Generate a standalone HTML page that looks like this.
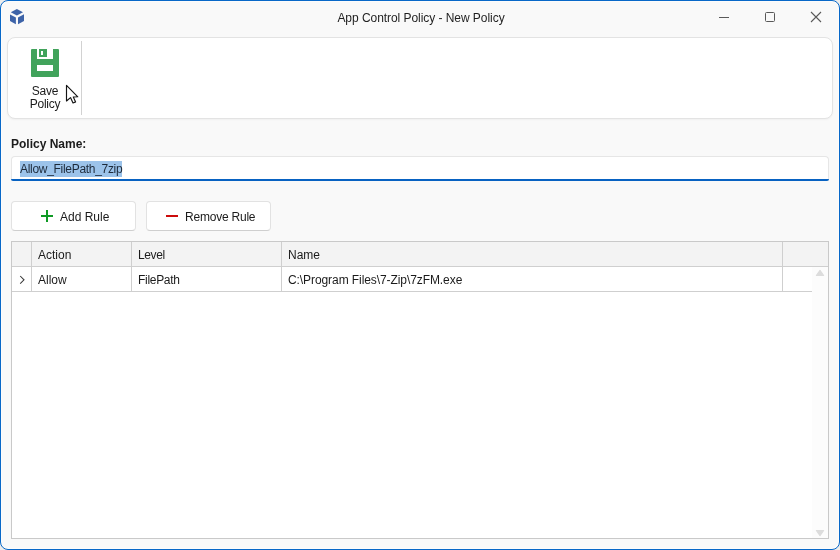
<!DOCTYPE html>
<html><head><meta charset="utf-8">
<style>
html,body{margin:0;padding:0;width:840px;height:550px;overflow:hidden;background:#ececec;}
*{box-sizing:border-box;}
body{font-family:"Liberation Sans",sans-serif;color:#1b1b1b;position:relative;}
.abs{position:absolute;}
#win{position:absolute;left:0;top:0;width:840px;height:550px;border:1px solid #0868c8;border-radius:8px;background:#f9f9f9;box-shadow:inset 1px 1px 0 #fcfcfc, inset -1px -1px 0 #fcfcfc;overflow:hidden;}
.t{position:absolute;white-space:pre;font-size:12px;line-height:14px;will-change:transform;}
#title{left:1px;width:840px;letter-spacing:-0.05px;text-align:center;top:11px;color:#1f1f1f;}
#toolbar{left:7px;top:37px;width:826px;height:82px;background:#fff;border:1px solid #e3e3e3;border-radius:8px;box-shadow:0 1px 2px rgba(0,0,0,0.04);}
#sep{left:81px;top:41px;width:1px;height:74px;background:#d2d2d2;}
#tb{left:11px;top:156px;width:818px;height:25px;background:#fff;border:1px solid #e6e6e6;border-bottom:none;border-radius:4px 4px 2px 2px;}
#tbline{left:11px;top:179px;width:818px;height:2px;background:#0862c2;border-radius:0 0 2px 2px;}
#sel{left:20px;top:161px;width:102px;height:16px;background:#9cc3ea;}
.btn{position:absolute;top:201px;height:30px;width:125px;background:#fff;border:1px solid #e2e2e2;border-bottom-color:#cfcfcf;border-radius:4px;}
#grid{left:11px;top:241px;width:818px;height:298px;background:#fff;border:1px solid #c9c9c9;}
#ghead{left:12px;top:242px;width:816px;height:24px;background:#f3f3f3;}
.hl{position:absolute;height:1px;background:#cfcfcf;}
.vl{position:absolute;width:1px;background:#cfcfcf;}
</style></head><body>
<div id="win">
</div>
<!-- title bar -->
<svg class="abs" style="left:0px;top:0px" width="30" height="30" viewBox="0 0 30 30">
  <path d="M16.9 9 L23 12.2 L16.9 15.5 L10.8 12.2 Z" fill="#3d63a8"/>
  <path d="M10 14.4 L15.9 17.6 L15.9 24.2 L10 21.1 Z" fill="#3d63a8"/>
  <path d="M18 17.6 L24 14.3 L24 21.1 L18 24.2 Z" fill="#3d63a8"/>
</svg>
<div class="t" id="title">App Control Policy - New Policy</div>
<div class="abs" style="left:719px;top:17px;width:10px;height:1px;background:#595959"></div>
<div class="abs" style="left:765px;top:12px;width:10px;height:10px;border:1px solid #595959;border-radius:1.5px"></div>
<svg class="abs" style="left:810px;top:11px" width="13" height="13" viewBox="0 0 13 13">
  <path d="M1 1 L11 11 M11 1 L1 11" stroke="#595959" stroke-width="1.1" fill="none"/>
</svg>

<!-- toolbar -->
<div class="abs" id="toolbar"></div>
<svg class="abs" style="left:31px;top:49px" width="28" height="28" viewBox="0 0 28 28">
  <path d="M1 0 H6 V10 H22 V0 H27 Q28 0 28 1 V27 Q28 28 27 28 H1 Q0 28 0 27 V1 Q0 0 1 0 Z" fill="#41a35b"/>
  <path d="M8 0 H16 V8 H8 Z M10 2 V6 H12 V2 Z" fill="#41a35b" fill-rule="evenodd"/>
  <rect x="6" y="16" width="16" height="6" fill="#fff"/>
</svg>
<div class="t" style="left:31px;top:84px;width:28px;text-align:center;letter-spacing:-0.25px">Save</div>
<div class="t" style="left:25px;top:97px;width:40px;text-align:center;letter-spacing:-0.25px">Policy</div>
<div class="abs" id="sep"></div>
<svg class="abs" style="left:62px;top:82px" width="20" height="24" viewBox="0 0 20 24">
  <path d="M4.5 3.3 L4.5 19 L8.5 15.6 L11 21 L13.6 19.9 L11.3 15 L15.8 14.8 Z" fill="#fff" stroke="#141414" stroke-width="1.15" stroke-linejoin="round"/>
</svg>

<!-- policy name -->
<div class="t" style="left:11px;top:137px;font-weight:bold;">Policy Name:</div>
<div class="abs" id="tb"></div>
<div class="abs" id="tbline"></div>
<div class="abs" id="sel"></div>
<div class="t" style="left:20px;top:162px;color:#1d2a3a;letter-spacing:-0.3px">Allow_FilePath_7zip</div>

<!-- buttons -->
<div class="btn" style="left:11px"></div>
<svg class="abs" style="left:41px;top:210px" width="12" height="12" viewBox="0 0 12 12">
  <path d="M6 0 V12 M0 6 H12" stroke="#0f9a25" stroke-width="2" fill="none"/>
</svg>
<div class="t" style="left:60px;top:210px">Add Rule</div>
<div class="btn" style="left:146px"></div>
<div class="abs" style="left:166px;top:215px;width:12px;height:2px;background:#cc0c0c"></div>
<div class="t" style="left:185px;top:210px;letter-spacing:-0.22px">Remove Rule</div>

<!-- grid -->
<div class="abs" id="grid"></div>
<div class="abs" id="ghead"></div>
<div class="abs" style="left:812px;top:267px;width:16px;height:271px;background:#fcfcfc"></div>
<div class="hl" style="left:12px;top:266px;width:816px"></div>
<div class="hl" style="left:12px;top:291px;width:800px"></div>
<div class="vl" style="left:31px;top:242px;height:49px"></div>
<div class="vl" style="left:131px;top:242px;height:49px"></div>
<div class="vl" style="left:281px;top:242px;height:49px"></div>
<div class="vl" style="left:782px;top:242px;height:49px"></div>
<div class="t" style="left:38px;top:248px">Action</div>
<div class="t" style="left:138px;top:248px;letter-spacing:-0.4px">Level</div>
<div class="t" style="left:288px;top:248px">Name</div>
<svg class="abs" style="left:14px;top:270px" width="18" height="20" viewBox="0 0 18 20">
  <path d="M6.2 6 L10 9.8 L6.2 13.6" stroke="#383838" stroke-width="1.05" fill="none"/>
</svg>
<div class="t" style="left:38px;top:273px">Allow</div>
<div class="t" style="left:138px;top:273px;letter-spacing:-0.3px">FilePath</div>
<div class="t" style="left:288px;top:273px;letter-spacing:-0.08px">C:\Program Files\7-Zip\7zFM.exe</div>
<svg class="abs" style="left:815px;top:269px" width="10" height="8" viewBox="0 0 10 8">
  <path d="M5 1.4 L8.6 6.5 L1.4 6.5 Z" fill="#dcdcdc" stroke="#dcdcdc" stroke-width="1.2" stroke-linejoin="round"/>
</svg>
<svg class="abs" style="left:815px;top:529px" width="10" height="8" viewBox="0 0 10 8">
  <path d="M1.4 1.5 L8.6 1.5 L5 6.6 Z" fill="#dcdcdc" stroke="#dcdcdc" stroke-width="1.2" stroke-linejoin="round"/>
</svg>
</body></html>
